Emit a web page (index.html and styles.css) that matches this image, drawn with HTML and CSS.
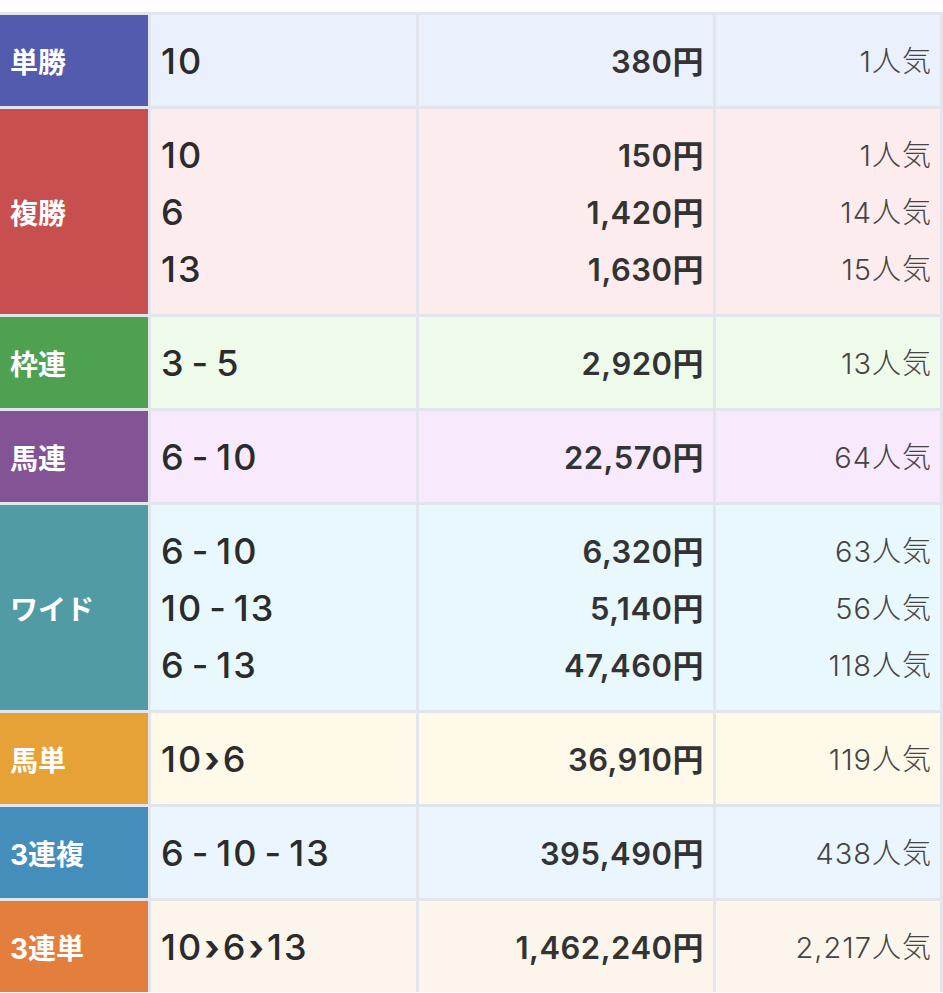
FILE: index.html
```html
<!DOCTYPE html>
<html lang="ja">
<head>
<meta charset="utf-8">
<title>払戻金</title>
<link rel="stylesheet" href="styles.css">
</head>
<body>
<div class="payout">
  <div class="row tansho">
    <div class="label">単勝</div>
    <div class="nums"><div>10</div></div>
    <div class="yen"><div>380円</div></div>
    <div class="pop"><div>1人気</div></div>
  </div>
  <div class="row fukusho">
    <div class="label">複勝</div>
    <div class="nums"><div>10</div><div>6</div><div>13</div></div>
    <div class="yen"><div>150円</div><div>1,420円</div><div>1,630円</div></div>
    <div class="pop"><div>1人気</div><div>14人気</div><div>15人気</div></div>
  </div>
  <div class="row wakuren">
    <div class="label">枠連</div>
    <div class="nums"><div>3<span class="sep">-</span>5</div></div>
    <div class="yen"><div>2,920円</div></div>
    <div class="pop"><div>13人気</div></div>
  </div>
  <div class="row umaren">
    <div class="label">馬連</div>
    <div class="nums"><div>6<span class="sep">-</span>10</div></div>
    <div class="yen"><div>22,570円</div></div>
    <div class="pop"><div>64人気</div></div>
  </div>
  <div class="row wide">
    <div class="label">ワイド</div>
    <div class="nums"><div>6<span class="sep">-</span>10</div><div>10<span class="sep">-</span>13</div><div>6<span class="sep">-</span>13</div></div>
    <div class="yen"><div>6,320円</div><div>5,140円</div><div>47,460円</div></div>
    <div class="pop"><div>63人気</div><div>56人気</div><div>118人気</div></div>
  </div>
  <div class="row umatan">
    <div class="label">馬単</div>
    <div class="nums"><div>10<span class="arr">›</span>6</div></div>
    <div class="yen"><div>36,910円</div></div>
    <div class="pop"><div>119人気</div></div>
  </div>
  <div class="row trio">
    <div class="label">3連複</div>
    <div class="nums"><div>6<span class="sep">-</span>10<span class="sep">-</span>13</div></div>
    <div class="yen"><div>395,490円</div></div>
    <div class="pop"><div>438人気</div></div>
  </div>
  <div class="row trifecta">
    <div class="label">3連単</div>
    <div class="nums"><div>10<span class="arr">›</span>6<span class="arr">›</span>13</div></div>
    <div class="yen"><div>1,462,240円</div></div>
    <div class="pop"><div>2,217人気</div></div>
  </div>
</div>
</body>
</html>
```
FILE: styles.css
```css
html, body {
  margin: 0;
  padding: 0;
  background: #ffffff;
}

body {
  font-family: Inter, "Noto Sans CJK JP", sans-serif;
  color: #333333;
}

.payout {
  margin-top: 12px;
  display: flex;
  flex-direction: column;
  gap: 3px;
  padding: 3px 3px 0 0;
  background: #e2e6ec;
}

.row {
  display: grid;
  grid-template-columns: 148px 265px 294px 224px;
  column-gap: 3px;
}

.label {
  display: flex;
  align-items: center;
  padding-left: 10px;
  color: #ffffff;
  font-size: 28px;
  font-weight: 700;
}

.nums, .yen, .pop {
  padding: 18px 10px 16px;
  line-height: 57px;
}

.nums {
  padding-left: 10px;
  font-size: 36px;
  font-weight: 500;
  letter-spacing: 2px;
  color: #2b2b2b;
}

.yen {
  text-align: right;
  padding-right: 9px;
  font-size: 31px;
  font-weight: 600;
  letter-spacing: 0.5px;
  color: #333333;
}

.pop {
  text-align: right;
  padding-right: 8px;
  font-size: 29px;
  font-weight: 300;
  letter-spacing: 1px;
  color: #444444;
}

.sep {
  margin: 0 6px;
}

.arr {
  margin: 0 1px;
  font-weight: 700;
}

.tansho .label { background: #525bad; }
.tansho > div:not(.label) { background: #eaf1fc; }

.fukusho .label { background: #c84f50; }
.fukusho > div:not(.label) { background: #fdeced; }

.wakuren .label { background: #4fa152; }
.wakuren > div:not(.label) { background: #effbea; }

.umaren .label { background: #835396; }
.umaren > div:not(.label) { background: #f8e9fc; }

.wide .label { background: #519ba4; }
.wide > div:not(.label) { background: #e9f8fd; }

.umatan .label { background: #e6a237; }
.umatan > div:not(.label) { background: #fef9e8; }

.trio .label { background: #448ebc; }
.trio > div:not(.label) { background: #eaf5fd; }

.trifecta .label { background: #e37e3d; }
.trifecta > div:not(.label) { background: #fcf5ec; }
```
